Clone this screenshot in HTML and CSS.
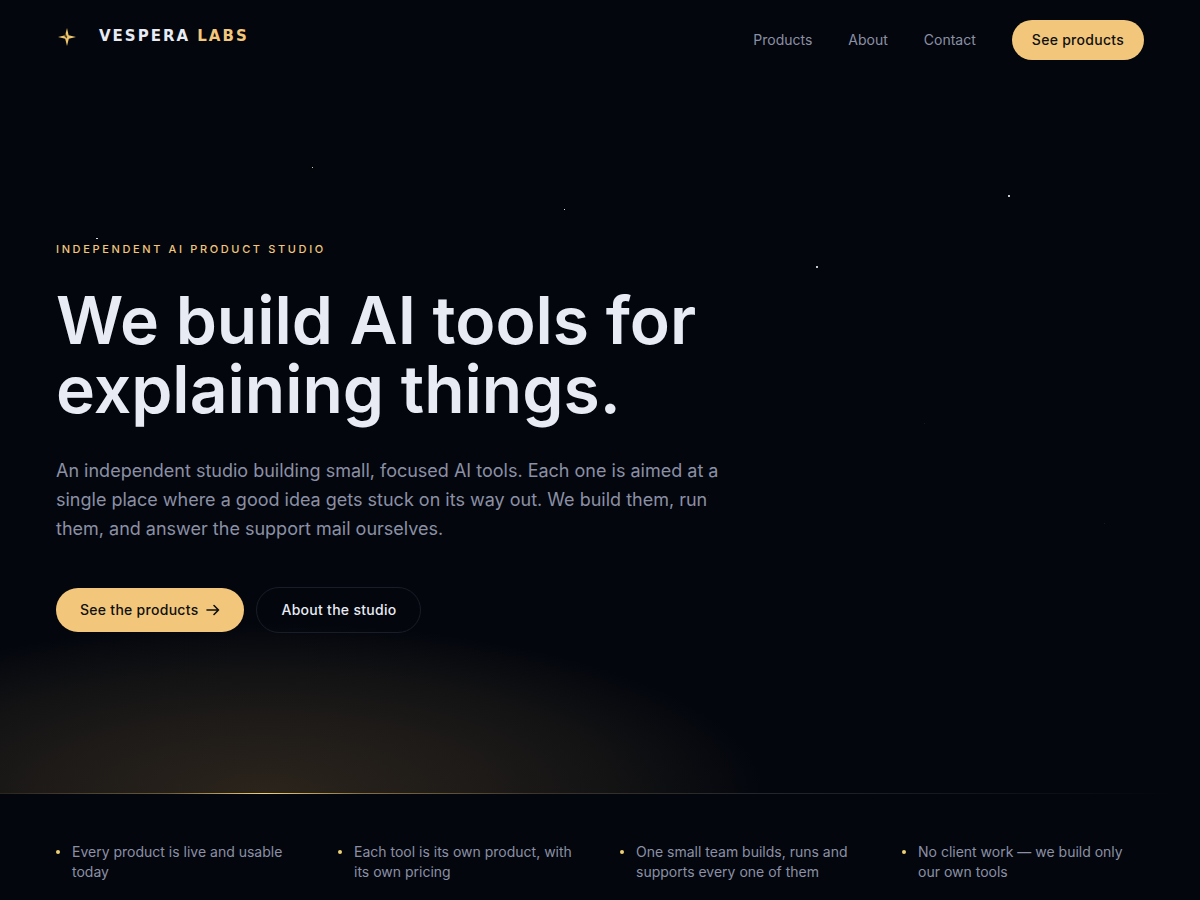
FILE: index.html
```html
<!DOCTYPE html>
<html lang="en">
<head>
<meta charset="utf-8">
<meta name="viewport" content="width=device-width, initial-scale=1">
<title>Vespera Labs</title>
<link rel="stylesheet" href="styles.css">
</head>
<body>
<header class="site-header">
  <a class="brand" href="#">
    <svg class="brand-mark" viewBox="0 0 22 22" aria-hidden="true">
      <path class="mark-body" d="M11 2 L12.6 9.2 L20 11 L12.8 12.8 L11 20 L9.2 12.8 L2 11 L9.2 9.2 Z"/>
      <path class="mark-cut" d="M9.6 6.5 L8.2 10 L10.6 12.6 L11.4 10.8 L10.4 9.6 Z"/>
    </svg>
    <span class="brand-name">VESPERA <span class="brand-accent">LABS</span></span>
  </a>
  <nav class="site-nav" aria-label="Main">
    <a class="nav-link" href="#products">Products</a>
    <a class="nav-link" href="#about">About</a>
    <a class="nav-link" href="#contact">Contact</a>
    <a class="button button-small button-gold" href="#products">See products</a>
  </nav>
</header>
<main>
  <section class="hero">
    <div class="sky" aria-hidden="true"></div>
    <div class="hero-copy">
      <p class="eyebrow">INDEPENDENT AI PRODUCT STUDIO</p>
      <h1 class="headline">We build AI tools for explaining things.</h1>
      <p class="lead">An independent studio building small, focused AI tools. Each one is aimed at a single place where a good idea gets stuck on its way out. We build them, run them, and answer the support mail ourselves.</p>
      <div class="actions">
        <a class="button button-gold" href="#products">See the products
          <svg class="arrow" viewBox="0 0 14 14" aria-hidden="true"><path d="M1 7H12.5M8 2.5L12.5 7L8 11.5"/></svg>
        </a>
        <a class="button button-outline" href="#about">About the studio</a>
      </div>
    </div>
  </section>
  <div class="horizon"></div>
  <ul class="facts">
    <li class="fact">Every product is live and usable today</li>
    <li class="fact">Each tool is its own product, with its own pricing</li>
    <li class="fact">One small team builds, runs and supports every one of them</li>
    <li class="fact">No client work — we build only our own tools</li>
  </ul>
</main>
</body>
</html>
```
FILE: styles.css
```css
:root {
  --night: #03060d;
  --gold: #f2c77c;
  --text: #e8ebf4;
  --muted: #8b90a5;
}

* { box-sizing: border-box; }

body {
  margin: 0;
  background: var(--night);
  color: var(--text);
  font-family: Inter, "Liberation Sans", sans-serif;
  overflow-x: hidden;
}

a { color: inherit; text-decoration: none; }

.site-header {
  display: flex;
  align-items: center;
  justify-content: space-between;
  padding: 20px 56px;
}

.brand { display: flex; align-items: flex-start; gap: 21px; }
.brand-mark { width: 22px; height: 22px; }
.mark-body { fill: #edc66f; }
.mark-cut { fill: #4f421f; }
.brand-name { font-family: "DejaVu Sans", Inter, sans-serif; font-size: 15px; font-weight: 700; line-height: 20px; letter-spacing: 2px; padding-bottom: 8px; }
.brand-accent { color: var(--gold); }

.site-nav { display: flex; align-items: center; gap: 36px; }
.nav-link { color: var(--muted); font-size: 14px; line-height: 20px; }

.button {
  display: inline-flex;
  align-items: center;
  gap: 8px;
  padding: 12px 24px;
  border-radius: 24px;
  font-size: 14px;
  font-weight: 500;
  line-height: 20px;
  letter-spacing: 0.02em;
}
.button-small { padding: 10px 20px; }
.button-gold { background: var(--gold); color: #10100f; }
.button-outline { border: 1px solid #1a1d28; }
.arrow { width: 14px; height: 14px; fill: none; stroke: currentColor; stroke-width: 1.6; stroke-linecap: round; stroke-linejoin: round; }

.hero {
  position: relative;
  padding: 160px 56px;
  background: radial-gradient(ellipse 500px 170px at 22% 100%, #2b241c 0%, #1d1a18 45%, #131314 70%, transparent 100%);
}
.horizon {
  height: 1px;
  background: linear-gradient(90deg, #28251f 0%, #6c5b3a 14%, #f2d276 22%, #877044 30%, #3a342a 45%, #23252b 65%, transparent 98%);
}
.sky {
  position: absolute;
  inset: 0;
  background:
    linear-gradient(#c6c8d0, #c6c8d0) 1008px 115px / 2px 2px no-repeat,
    linear-gradient(#c6c8d0, #c6c8d0) 816px 186px / 2px 2px no-repeat,
    linear-gradient(#d9c394, #d9c394) 312px 87px / 1px 1px no-repeat,
    linear-gradient(#d9dbe2, #d9dbe2) 564px 129px / 1px 1px no-repeat,
    linear-gradient(#d9dbe2, #d9dbe2) 96px 158px / 2px 1px no-repeat,
    linear-gradient(#15171d, #15171d) 924px 343px / 1px 1px no-repeat,
    linear-gradient(#15171d, #15171d) 708px 415px / 1px 1px no-repeat,
    linear-gradient(#15171d, #15171d) 1104px 443px / 1px 1px no-repeat;
}
.hero-copy { position: relative; max-width: 664px; }
.eyebrow { margin: 0 0 28px; color: var(--gold); font-size: 11px; font-weight: 500; line-height: 18px; letter-spacing: 0.24em; }
.headline { margin: 0 0 32px; font-size: 66px; font-weight: 600; line-height: 69px; }
.lead { margin: 0 0 44px; color: var(--muted); font-size: 18px; line-height: 29px; }
.actions { display: flex; align-items: center; flex-wrap: wrap; gap: 12px; }

.facts {
  display: grid;
  grid-template-columns: repeat(4, 1fr);
  gap: 40px;
  margin: 0;
  padding: 48px 56px;
  list-style: none;
}
.fact { display: flex; gap: 12px; color: var(--muted); font-size: 14px; line-height: 20px; }
.fact::before { content: ""; flex: none; width: 4px; height: 4px; margin-top: 8px; border-radius: 50%; background: #efd075; }
```
